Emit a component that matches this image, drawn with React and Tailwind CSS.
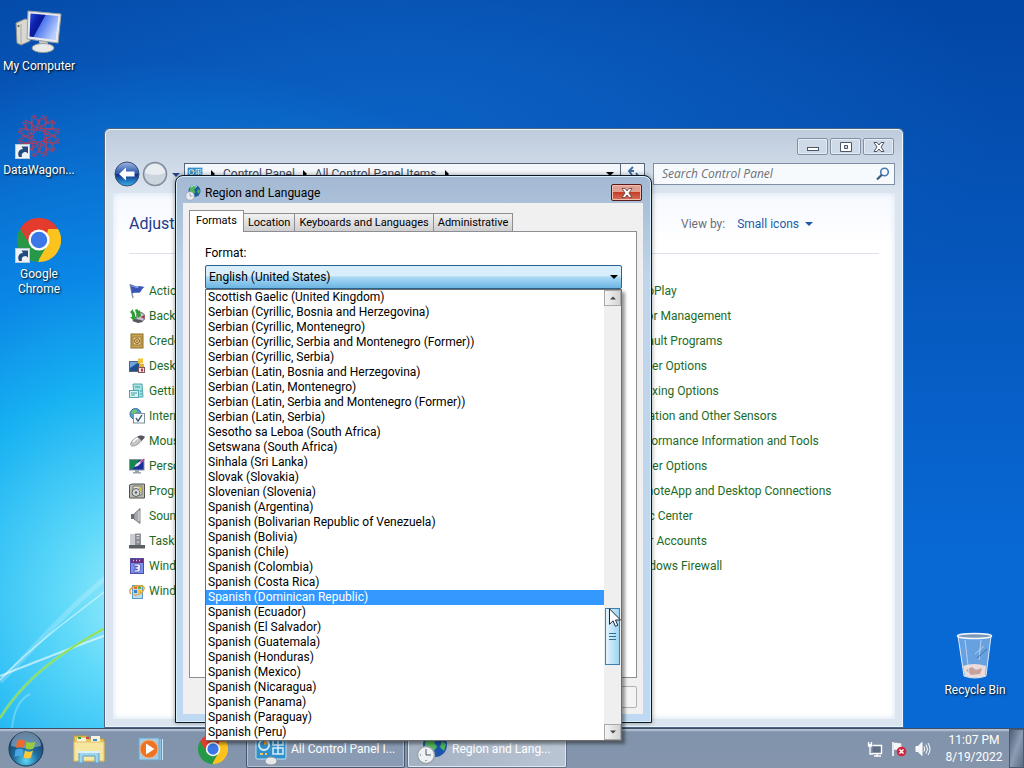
import React, { useState } from 'react';

const FORMATS = [
  'Scottish Gaelic (United Kingdom)',
  'Serbian (Cyrillic, Bosnia and Herzegovina)',
  'Serbian (Cyrillic, Montenegro)',
  'Serbian (Cyrillic, Serbia and Montenegro (Former))',
  'Serbian (Cyrillic, Serbia)',
  'Serbian (Latin, Bosnia and Herzegovina)',
  'Serbian (Latin, Montenegro)',
  'Serbian (Latin, Serbia and Montenegro (Former))',
  'Serbian (Latin, Serbia)',
  'Sesotho sa Leboa (South Africa)',
  'Setswana (South Africa)',
  'Sinhala (Sri Lanka)',
  'Slovak (Slovakia)',
  'Slovenian (Slovenia)',
  'Spanish (Argentina)',
  'Spanish (Bolivarian Republic of Venezuela)',
  'Spanish (Bolivia)',
  'Spanish (Chile)',
  'Spanish (Colombia)',
  'Spanish (Costa Rica)',
  'Spanish (Dominican Republic)',
  'Spanish (Ecuador)',
  'Spanish (El Salvador)',
  'Spanish (Guatemala)',
  'Spanish (Honduras)',
  'Spanish (Mexico)',
  'Spanish (Nicaragua)',
  'Spanish (Panama)',
  'Spanish (Paraguay)',
  'Spanish (Peru)',
];

const TABS = ['Formats', 'Location', 'Keyboards and Languages', 'Administrative'];

const RIGHT_ITEMS = [
  'AutoPlay',
  'Color Management',
  'Default Programs',
  'Folder Options',
  'Indexing Options',
  'Location and Other Sensors',
  'Performance Information and Tools',
  'Power Options',
  'RemoteApp and Desktop Connections',
  'Sync Center',
  'User Accounts',
  'Windows Firewall',
];

/* ---------- small icons (16x16) ---------- */

const LEFT_ITEMS = [
  {
    name: 'Action Center',
    icon: (
      <>
        <path d="M1 1l3 14" stroke="#8f95a8" strokeWidth="1.4" />
        <path d="M1.500 2c3-1 4 2 7 1.500S12 3 15.500 4c-2 1.500-3 2.500-4 5-2 1.500-5 0-8.500 1.500z" fill="#3a55b8" />
        <path d="M2 3c3-.5 4 2 7 1.500" stroke="#8fa4ea" fill="none" />
      </>
    ),
  },
  {
    name: 'Backup and Restore',
    icon: (
      <>
        <circle cx="11.500" cy="9" r="4.500" fill="#c9c3cf" stroke="#6f6a78" />
        <path d="M11.500 9l4-2v4z" fill="#a8364a" />
        <path d="M1 4l3-3v2c2 1 2 3 2 6l2 0-3 4-4-4h2c0-2 0-3-2-5zM6 2l2-1 2 2 1-1 1 6-3 2z" fill="#2f9e35" />
        <path d="M3 13l3-2 6 1 2 2-5 1z" fill="#55595f" />
      </>
    ),
  },
  {
    name: 'Credential Manager',
    icon: (
      <>
        <rect x="2" y="1" width="12" height="14" fill="#c9a455" stroke="#8c6b26" />
        <rect x="4" y="4" width="8" height="8" fill="#e8d090" stroke="#9a7a36" />
        <circle cx="8" cy="8" r="2.500" fill="none" stroke="#8c5a20" />
        <circle cx="8" cy="8" r="0.800" fill="#5c3a10" />
      </>
    ),
  },
  {
    name: 'Desktop Gadgets',
    icon: (
      <>
        <rect x="0.500" y="3.500" width="10" height="10" fill="#1f4f8f" stroke="#5a6675" />
        <path d="M1 4h9L1 10z" fill="#6fa5da" />
        <rect x="9" y="0.500" width="5" height="5" fill="#f0c53c" />
        <rect x="10" y="6" width="5" height="4" fill="#e8b030" />
        <rect x="9.500" y="9.500" width="6" height="5" fill="#f4e4e4" stroke="#7c5560" />
        <path d="M12 10.500h2v3h-2z" fill="#c03848" />
      </>
    ),
  },
  {
    name: 'Getting Started',
    icon: (
      <>
        <path d="M4 1h9l1 13H5z" fill="#a6e2e0" stroke="#4fa5ac" />
        <rect x="0.500" y="7.500" width="9" height="7" fill="#d7f4f2" stroke="#4fa5ac" />
        <path d="M6 4h5M2 10h6M2 12h4M11 8h2M11 11h2" stroke="#3f9ba2" />
      </>
    ),
  },
  {
    name: 'Internet Options',
    icon: (
      <>
        <circle cx="6.500" cy="6" r="5.500" fill="#4c9ed0" stroke="#3a7399" />
        <path d="M3 3c2-2 5-1 5 0S6 6 4 6 2 4 3 3z" fill="#7cc46a" />
        <rect x="4.500" y="5.500" width="11" height="9.500" fill="#f6fafc" stroke="#7f9399" />
        <path d="M7 10l2 3 4-6" stroke="#2b4f70" fill="none" strokeWidth="1.300" />
      </>
    ),
  },
  {
    name: 'Mouse',
    icon: (
      <>
        <path d="M2 10c1-3 5-6 8-6 3 0 4 1 3 3-2 3-6 6-9 6-2 0-3-1-2-3z" fill="#c6c6c9" stroke="#9a9a9f" />
        <path d="M8 4c2-2 6-2 8 0-1 2-3 3-4 4 0-2-2-3-4-4z" fill="#55555b" />
        <path d="M4 9c1-2 3-3 5-4" stroke="#fff" strokeWidth="1.500" fill="none" />
      </>
    ),
  },
  {
    name: 'Personalization',
    icon: (
      <>
        <rect x="0.500" y="1.500" width="14.500" height="10.500" fill="#1a2f9c" stroke="#8b93a6" />
        <path d="M1 2h9L4 11H1z" fill="#14854c" />
        <path d="M5 9l2-3 7-5 1 1-6 6z" fill="#e7d9ec" />
        <path d="M11 4l4-3.500.5 1L12 5z" fill="#b83070" />
        <path d="M6 12h4v2h2v1.500H4V14h2z" fill="#9aa2ad" />
      </>
    ),
  },
  {
    name: 'Programs and Features',
    icon: (
      <>
        <path d="M0.500 2v13h15V1H3z" fill="#b9bcb4" stroke="#50534e" />
        <path d="M4 3h9v9H4z" fill="#e4e2cc" stroke="#74776c" />
        <circle cx="7" cy="9.500" r="4" fill="#d4d6d8" stroke="#5d6166" />
        <circle cx="7" cy="9.500" r="1.200" fill="#5a5d60" />
        <path d="M10 4h2v4h-2z" fill="#d9b93c" />
      </>
    ),
  },
  {
    name: 'Sound',
    icon: (
      <>
        <path d="M2 6h3v5H2z" fill="#6a6d70" />
        <path d="M5 6l6-5.500v15L5 11z" fill="#a6a9ab" stroke="#6c6f72" strokeWidth="0.800" />
        <path d="M10 3v10" stroke="#e2e4e6" />
      </>
    ),
  },
  {
    name: 'Taskbar and Start Menu',
    icon: (
      <>
        <path d="M1 1h5v11H1z" fill="#c9cccf" />
        <rect x="6" y="0.500" width="6" height="11.500" fill="#8c9094" />
        <path d="M7.500 2.500h3M7.500 5h3M9 8v2" stroke="#e2e4e6" />
        <rect x="0" y="12" width="16" height="3.500" fill="#5b5f63" />
      </>
    ),
  },
  {
    name: 'Windows CardSpace',
    icon: (
      <>
        <rect x="1.500" y="0.500" width="13" height="15" fill="#7d90f0" stroke="#4c50a8" />
        <rect x="2" y="1" width="12" height="4" fill="#66307f" />
        <path d="M5 6h4c3 0 3 3 2 4 1 2 0 4-3 4H5v-2h3c1 0 1-1 0-1H6V9h2c1 0 1-1 0-1H5z" fill="#f2f4ff" stroke="#2a2f94" strokeWidth="0.600" />
        <path d="M4 2.500h1M7 2.500h1M10 2.500h1" stroke="#e4b8ee" strokeWidth="1.500" />
      </>
    ),
  },
  {
    name: 'Windows Update',
    icon: (
      <>
        <rect x="3.500" y="2.500" width="10" height="13" fill="#b6def2" stroke="#5c9cc4" />
        <path d="M5 3h3v3H5z" fill="#e2683c" />
        <path d="M9 3h3v3H9z" fill="#62b04a" />
        <path d="M5 7h3v3H5z" fill="#3c80cc" />
        <path d="M9 7h3v3H9z" fill="#f0bd38" />
        <path d="M2 11C-1 8 2 4 7 3s9 0 8 3-5 7-10 6" fill="none" stroke="#e3a53c" strokeWidth="1.400" />
      </>
    ),
  },
];

/* ---------- larger drawings ---------- */

const Wallpaper = () => (
  <svg className="absolute bottom-0 left-0 w-60 h-[330px]" viewBox="0 0 240 330" fill="none" aria-hidden="true">
    <path d="M0 284C40 245 60 215 130 160" stroke="#fff" strokeOpacity="0.2" strokeWidth="5" />
    <path d="M0 282C35 245 70 220 160 152" stroke="#e9fbff" strokeOpacity="0.6" strokeWidth="1.500" />
    <path d="M0 278C30 266 70 250 160 217" stroke="#fff" strokeOpacity="0.6" strokeWidth="2" />
    <path d="M0 320C25 280 60 248 180 192" stroke="#b8ee8c" strokeOpacity="0.5" strokeWidth="3" />
    <path d="M0 320C25 280 60 248 180 192" stroke="#8fe04a" strokeWidth="1.500" />
    <path d="M12 330C14 310 22 300 30 296" stroke="#fff" strokeOpacity="0.25" strokeWidth="2" />
  </svg>
);

const ShortcutArrow = () => (
  <svg className="absolute bottom-0 left-0 w-4 h-4" viewBox="0 0 16 16" aria-hidden="true">
    <rect x="0.500" y="0.500" width="14" height="14" fill="#edf3f8" stroke="#b9c9d8" />
    <path d="M4 13c-2-4 0-8 4-8L6.500 2.500H13v7L11 8C8 8 6 9.500 7 13z" fill="#224a7c" />
  </svg>
);

const ChromeLogo = ({ className }) => (
  <svg className={className} viewBox="0 0 48 48" aria-hidden="true">
    <path d="M24 24L3.200 12A24 24 0 0 1 44.800 12z" fill="#e33b2e" />
    <path d="M24 24L44.800 12A24 24 0 0 1 24 48z" fill="#fcc31e" />
    <path d="M24 24L24 48A24 24 0 0 1 3.200 12z" fill="#279847" />
    <path d="M24 12h20.800L44 12H24zM14.500 29.500L3.200 12 24 24z" fill="#e33b2e" />
    <path d="M33.500 29.500L23 48h2L34 12h10.800v16z" fill="#fcc31e" />
    <path d="M14.500 29.500L3.200 12 3 30 20 47h3l8-14z" fill="#279847" />
    <circle cx="24" cy="24" r="11.500" fill="#fff" />
    <circle cx="24" cy="24" r="9" fill="#3b78e7" />
  </svg>
);

const ComputerIcon = () => (
  <svg className="w-12 h-11" viewBox="0 0 48 44" aria-hidden="true">
    <defs>
      <linearGradient id="screen" x1="0" y1="0" x2="1" y2="0.500">
        <stop offset="0" stopColor="#2a4fe0" />
        <stop offset="0.300" stopColor="#0a1ea8" />
        <stop offset="0.450" stopColor="#0a1a98" />
        <stop offset="0.480" stopColor="#4f76ee" />
        <stop offset="1" stopColor="#b7d0ff" />
      </linearGradient>
    </defs>
    <path d="M1 13l9-4 5 1v21l-9 4-4-2z" fill="#d9d9d2" stroke="#8d8f8e" />
    <path d="M6 14v20" stroke="#a9aaa6" />
    <circle cx="3.500" cy="16" r="1" fill="#555" />
    <path d="M24 31h8l2 5h-9z" fill="#c6c9cb" />
    <ellipse cx="28" cy="38" rx="11" ry="4.500" fill="#e8eaea" stroke="#96999b" />
    <path d="M13 1l33 3-3 29-31-4z" fill="#e8eaec" stroke="#9aa0a6" />
    <path d="M15.500 3.500l28 2.500-3 24-26-3.500z" fill="url(#screen)" />
  </svg>
);

const WagonIcon = () => (
  <svg className="w-11 h-11" viewBox="-22 -22 44 44" fill="none" stroke="#c23a55" strokeWidth="0.700" aria-hidden="true">
    {[0, 30, 60, 90, 120, 150, 180, 210, 240, 270, 300, 330].map((a) => (
      <g key={a} transform={`rotate(${a})`}>
        <path d="M0-6L7-12 4-21 0-15-4-21-7-12z" />
        <path d="M-3-7L9-14" />
      </g>
    ))}
    <circle r="6" />
  </svg>
);

const RecycleBin = () => (
  <svg className="w-10 h-12" viewBox="0 0 40 48" aria-hidden="true">
    <path d="M3 4h33l-5 40q-11 4-22 0z" fill="#a9c8e6" fillOpacity="0.600" stroke="#dcebf7" />
    <path d="M8 34q11-4 23 0l-1 10q-10 3-20 0z" fill="#e9dcda" />
    <path d="M11 38l6-3 4 3 6-2-2 6-9 1z" fill="#c7a19e" />
    <path d="M10 8l4 34M20 22l9-8M26 8l-2 20" stroke="#e2f0fb" strokeOpacity="0.600" />
    <path d="M22 26l10-9" stroke="#456b9e" />
    <ellipse cx="19.500" cy="4" rx="17" ry="2.500" fill="#7a98b5" stroke="#eef6fc" strokeWidth="1.500" />
  </svg>
);

const GlobeClock = ({ className }) => (
  <svg className={className} viewBox="0 0 32 32" aria-hidden="true">
    <circle cx="19" cy="12" r="12" fill="#1d55ad" />
    <path d="M12 3c5-3 10-2 12 1l-3 4-3 1 3 5-4 5-5-6-3 0c0-4 1-8 3-10zM26 8l4 3-2 7-4-4z" fill="#4fb558" />
    <path d="M11 5c3-4 9-5 13-2" stroke="#c9efff" strokeWidth="2" fill="none" />
    <circle cx="10" cy="22" r="8.500" fill="#eef1f3" stroke="#9ba3ab" strokeWidth="1.500" />
    <path d="M10 16v6h5M10 27v1M4 22h1" stroke="#4c5660" fill="none" />
  </svg>
);

const PanelIcon = ({ className }) => (
  <svg className={className} viewBox="0 0 32 32" aria-hidden="true">
    <rect x="1" y="3" width="30" height="23" rx="1" fill="#318fcb" stroke="#bfe2f4" />
    <circle cx="9" cy="12" r="5" fill="none" stroke="#d6effb" strokeWidth="2" />
    <path d="M9 6l4 5-4 1z" fill="#f2a13a" />
    <path d="M18 7h10v5H18zM18 15h10v6H18zM23 7v14" fill="none" stroke="#d6effb" strokeWidth="1.500" />
    <path d="M5 21h3M10 21h2" stroke="#f4c65a" strokeWidth="2" />
    <ellipse cx="16" cy="28" rx="6" ry="4" fill="#e6e8ea" stroke="#8e9499" />
  </svg>
);

const StartOrb = () => (
  <svg className="w-9 h-9" viewBox="0 0 36 36" aria-hidden="true">
    <defs>
      <radialGradient id="orb" cx="0.500" cy="0.850" r="0.800">
        <stop offset="0" stopColor="#5fd6f4" />
        <stop offset="0.450" stopColor="#1f6d9f" />
        <stop offset="1" stopColor="#173a5e" />
      </radialGradient>
    </defs>
    <circle cx="18" cy="18" r="17" fill="url(#orb)" stroke="#1b3350" />
    <path d="M3 15a15 14 0 0 1 30 0q-15 4-30 0z" fill="#c3dcea" fillOpacity="0.450" />
    <path d="M9 10q4-3 8 0l-1 7q-4-2-8 0z" fill="#ee6a2e" />
    <path d="M18.500 10.500q4 2.500 9 0l-2 7q-4 2-8 0z" fill="#9acb3c" />
    <path d="M7.500 19q4-3 8 0l-1.500 7q-3-2-7.500 0z" fill="#4aa5e4" />
    <path d="M17 19.500q4 2.500 8 0l-2 7q-4 2-7.500 0z" fill="#fbc93a" />
  </svg>
);

const ExplorerIcon = () => (
  <svg className="w-8 h-8" viewBox="0 0 32 32" aria-hidden="true">
    <path d="M1 3h12l2 3h16v22H1z" fill="#e9c760" stroke="#c39a3a" />
    <path d="M4 5h9v5H4zM18 3h9v6h-9z" fill="#f7f3da" />
    <path d="M5 4h3v2H5z" fill="#3f9a4a" />
    <path d="M13 4h3v2h-3z" fill="#d0463a" />
    <path d="M20 6h4v2h-4z" fill="#3d8ed0" />
    <path d="M1 9h30v19H1z" fill="#f7e6a0" stroke="#e0c069" />
    <path d="M6 30V19h20v11h-4v-7H10v7z" fill="#9fd3ee" stroke="#579fc8" />
    <path d="M5 19h22" stroke="#d9f1fb" strokeWidth="2" />
  </svg>
);

const MediaIcon = () => (
  <svg className="w-7 h-6" viewBox="0 0 28 24" aria-hidden="true">
    <path d="M8 2h17v21H8z" fill="#4f9bcf" />
    <path d="M22 2v21M24.500 2v21" stroke="#cbe6f4" />
    <rect x="1" y="1" width="20" height="22" fill="#a3cce6" stroke="#6ea4c8" />
    <circle cx="11" cy="12" r="9" fill="#ec7423" stroke="#f7b27a" />
    <path d="M8 6.500l8.500 5.500L8 17.500z" fill="#fff" />
  </svg>
);

const Caret = ({ className }) => (
  <svg className={className} viewBox="0 0 8 4" fill="currentColor" aria-hidden="true">
    <path d="M0 0h8L4 4z" />
  </svg>
);

const Crumb = () => (
  <svg className="mx-2 w-1 h-2 text-black" viewBox="0 0 4 8" fill="currentColor" aria-hidden="true">
    <path d="M0 0l4 4-4 4z" />
  </svg>
);

const MousePointer = () => (
  <svg className="pointer-events-none absolute -top-px left-[3px] z-10 w-3 h-[19px]" viewBox="0 0 12 19" aria-hidden="true">
    <path d="M0.500 0.800v15.500l3.600-3.500 2.300 5.500 2.400-1-2.300-5.300h5z" fill="#fff" stroke="#1c2733" />
  </svg>
);

/* ---------- desktop ---------- */

const DesktopIcon = ({ label, children, shortcut }) => (
  <button className="flex w-[78px] h-[104px] flex-col items-center gap-[3px] text-xs leading-[15px] text-white text-shadow-[1px_1px_2px_#000]">
    <span className="relative flex h-12 w-12 items-center justify-center">
      {children}
      {shortcut && <ShortcutArrow />}
    </span>
    <span className="w-[78px]">{label}</span>
  </button>
);

const CaptionButton = ({ label, children }) => (
  <button
    aria-label={label}
    className="flex h-[17px] w-[31px] items-center justify-center rounded-xs border border-[#8390a3] bg-[#cedae7] shadow-[inset_0_0_0_1px_#e4edf5]"
  >
    <svg className="w-3 h-3" viewBox="0 0 12 12" fill="#fff" stroke="#4d5668" aria-hidden="true">
      {children}
    </svg>
  </button>
);

const ControlPanel = () => (
  <section className="absolute left-[104px] top-[128px] flex w-[800px] h-[600px] flex-col rounded-t-md border border-[#4d6486] bg-[#d9e5f2] bg-linear-to-b from-[#becbdc] to-[#dbe5f0] to-[64px] px-2 pb-2 shadow-[inset_0_0_0_1px_#eaf8fc]">
    <div className="flex h-[34px] items-end justify-end gap-0.5 pr-px pb-2">
      <CaptionButton label="Minimize">
        <rect x="0.500" y="6.500" width="11" height="3" />
      </CaptionButton>
      <CaptionButton label="Maximize">
        <path d="M0.500 1.500h11v9H.500zM4.500 4.500v3h3v-3z" fillRule="evenodd" />
      </CaptionButton>
      <CaptionButton label="Close">
        <path d="M1 1.500h3l2 2.500 2-2.500h3L8 6l3 4.500H8L6 8l-2 2.500H1L4 6z" />
      </CaptionButton>
    </div>
    <div className="flex h-[30px] items-start">
      <button aria-label="Back" className="-mt-0.5 ml-px h-[26px] w-[26px]">
        <svg viewBox="0 0 26 26" aria-hidden="true">
          <defs>
            <linearGradient id="back" x1="0" y1="0" x2="0" y2="1">
              <stop offset="0" stopColor="#9db8e2" />
              <stop offset="0.480" stopColor="#2a55ae" />
              <stop offset="0.520" stopColor="#0e2f86" />
              <stop offset="1" stopColor="#35b4ee" />
            </linearGradient>
          </defs>
          <circle cx="13" cy="13" r="12" fill="url(#back)" stroke="#3d4d70" />
          <path d="M5 13l7-6.500v4h8.500v5H12v4z" fill="#fff" />
        </svg>
      </button>
      <button aria-label="Forward" className="-mt-0.5 ml-0.5 h-[26px] w-[26px]">
        <svg viewBox="0 0 26 26" aria-hidden="true">
          <circle cx="13" cy="13" r="11.500" fill="#ccd4de" stroke="#808a99" strokeWidth="1.500" />
          <path d="M3 12a10 9 0 0 1 20 0q-10 4-20 0z" fill="#e9edf2" />
        </svg>
      </button>
      <button aria-label="Recent pages" className="ml-1 mt-2.5 text-[#2b438a]">
        <Caret className="w-2 h-1" />
      </button>
      <div className="ml-1 flex h-[22px] flex-1 items-center border border-[#56657a] bg-[#f4f8fc] text-xs text-[#3c4659]">
        <PanelIcon className="ml-0.5 w-4 h-4" />
        <Crumb />
        <a href="#control-panel">Control Panel</a>
        <Crumb />
        <a href="#all-items">All Control Panel Items</a>
        <Crumb />
        <Caret className="ml-auto mr-1.5 w-2 h-1 text-black" />
        <button aria-label="Refresh" className="flex h-full w-6 items-center justify-center border-l border-[#56657a] text-[#3f6f9f]">
          <svg className="w-4 h-4" viewBox="0 0 16 16" fill="none" stroke="currentColor" strokeWidth="2" aria-hidden="true">
            <path d="M8 1L4 5l3 4M4 5h5M11 15l3-4-3-4M14 11H9" />
          </svg>
        </button>
      </div>
      <label className="ml-2 flex h-[22px] w-[242px] items-center border border-[#7f90a6] bg-[#f7fafd] pl-2 pr-1">
        <input
          aria-label="Search Control Panel"
          placeholder="Search Control Panel"
          className="min-w-0 flex-1 font-['Open_Sans',sans-serif] text-xs italic outline-none placeholder:text-[#6c7078]"
        />
        <svg className="w-3.5 h-3.5" viewBox="0 0 14 14" fill="none" aria-hidden="true">
          <circle cx="8.500" cy="5" r="3.800" stroke="#4a78b0" strokeWidth="1.600" />
          <path d="M5.800 7.800L1 12.500" stroke="#3d5a80" strokeWidth="2.200" />
        </svg>
      </label>
    </div>
    <div className="flex-1 bg-white bg-linear-to-b from-[#f5f8fe] to-white to-[50px] px-4 shadow-[inset_0_0_6px_#d5e2f2]">
      <div className="flex h-[61px] items-center border-b border-[#dde3ec] pt-0.5">
        <h1 className="w-[552px] text-base text-[#1e3a8c]">Adjust your computer's settings</h1>
        <span className="text-xs text-[#6b6f78]">View by:</span>
        <button className="ml-3 flex items-center gap-1.5 text-xs text-[#1f5ba8]">
          Small icons
          <Caret className="w-2 h-1" />
        </button>
      </div>
      <div className="grid grid-cols-[480px_1fr] pt-6 text-xs text-[#1c6b25]">
        <ul>
          {LEFT_ITEMS.map((item) => (
            <li key={item.name}>
              <a href="#item" className="flex h-[25px] items-center gap-1">
                <svg className="w-4 h-4" viewBox="0 0 16 16" fill="none" aria-hidden="true">
                  {item.icon}
                </svg>
                {item.name}
              </a>
            </li>
          ))}
        </ul>
        <ul className="pl-5">
          {RIGHT_ITEMS.map((name) => (
            <li key={name}>
              <a href="#item" className="flex h-[25px] items-center whitespace-nowrap">{name}</a>
            </li>
          ))}
        </ul>
      </div>
    </div>
  </section>
);

const FormatList = () => (
  <div className="absolute left-0 top-full z-10 flex w-full border border-[#6d6d6d] bg-white shadow-[3px_3px_3px_#00000066]">
    <ul role="listbox" aria-label="Format list" className="flex-1">
      {FORMATS.map((name) => (
        <li
          key={name}
          role="option"
          aria-selected={name === 'Spanish (Dominican Republic)'}
          className="h-[15px] pl-0.5 text-xs leading-[15px] whitespace-nowrap text-black aria-selected:bg-[#3399ff] aria-selected:text-white"
        >
          {name}
        </li>
      ))}
    </ul>
    <div className="flex w-[17px] flex-col bg-[#efefef]">
      <button aria-label="Scroll up" className="flex h-4 items-center justify-center border border-[#a9a9a9] bg-linear-to-r from-[#f5f5f5] to-[#d3d3d3] text-[#444]">
        <Caret className="w-1.5 h-1 rotate-180" />
      </button>
      <div className="flex-1" />
      <div className="relative ml-px mr-px flex h-[57px] flex-col items-center justify-center gap-0.5 border border-[#3c7fb1] bg-linear-to-r from-[#e3f4fc] to-[#9cd5f3]">
        <span className="h-px w-[7px] bg-[#31708f]" />
        <span className="h-px w-[7px] bg-[#31708f]" />
        <span className="h-px w-[7px] bg-[#31708f]" />
        <MousePointer />
      </div>
      <div className="h-[59px]" />
      <button aria-label="Scroll down" className="flex h-4 items-center justify-center border border-[#a9a9a9] bg-linear-to-r from-[#f5f5f5] to-[#d3d3d3] text-[#444]">
        <Caret className="w-1.5 h-1" />
      </button>
    </div>
  </div>
);

const RegionDialog = () => {
  const [tab, setTab] = useState('Formats');

  return (
    <section className="absolute left-[175px] top-[175px] flex w-[477px] h-[548px] flex-col rounded-t-lg border border-[#0b1724] bg-[#c3d8ee] bg-linear-to-b from-[#a3b8d2] via-[#c0d4ea] via-[100px] to-[#bfd9f2] pl-[7px] pr-2 pb-2 shadow-[inset_0_0_0_1px_#d8f0fa,0_0_5px_#0006]">
      <header className="flex h-[27px] items-end justify-between pl-0.5 pr-px pb-0.5">
        <h2 className="flex items-center gap-1 text-xs leading-[15px] text-black">
          <GlobeClock className="w-4 h-4" />
          Region and Language
        </h2>
        <button
          aria-label="Close"
          className="flex h-[17px] w-[31px] items-center justify-center rounded-xs border border-[#5b1a1a] bg-linear-to-b from-[#e0a193] from-45% via-[#c43e28] via-50% to-[#d8705a] shadow-[inset_0_0_0_1px_#f0bdb0]"
        >
          <svg className="w-3 h-3" viewBox="0 0 12 12" fill="#fff" stroke="#5a3a3a" strokeWidth="0.800" aria-hidden="true">
            <path d="M1 1.500h3l2 2.500 2-2.500h3L8 6l3 4.500H8L6 8l-2 2.500H1L4 6z" />
          </svg>
        </button>
      </header>
      <div className="flex flex-1 flex-col bg-[#f0f0f0] px-[6px] pt-2 pb-[6px]">
        <div role="tablist" className="flex h-5 items-end text-[11px] leading-[14px] text-black">
          {TABS.map((name) => (
            <button
              key={name}
              role="tab"
              aria-selected={tab === name}
              onClick={() => setTab(name)}
              className="h-[18px] -ml-px border border-b-0 border-[#8c8e94] bg-linear-to-b from-[#f2f2f2] to-[#cfcfcf] px-1 whitespace-nowrap first:ml-0 aria-selected:relative aria-selected:z-10 aria-selected:-mb-px aria-selected:h-[22px] aria-selected:bg-none aria-selected:bg-white aria-selected:px-1.5 aria-selected:pb-0.5"
            >
              {name}
            </button>
          ))}
        </div>
        <div role="tabpanel" className="flex-1 border border-[#8c8e94] bg-white px-[15px] pt-3.5">
          <label htmlFor="format" className="block text-xs leading-[15px] text-black">Format:</label>
          <div className="relative mt-1 w-[417px]">
            <select
              id="format"
              className="block h-6 w-full appearance-none rounded-xs border border-[#2c628b] bg-linear-to-b from-[#d8effb] from-45% via-[#a9daf5] via-50% to-[#6cb5e3] pl-[3px] text-xs text-black"
            >
              <option>English (United States)</option>
            </select>
            <Caret className="pointer-events-none absolute right-1 top-2.5 w-2 h-1 text-black" />
            <FormatList />
          </div>
        </div>
        <div className="mt-2 flex justify-end gap-1.5 text-xs">
          {['OK', 'Cancel', 'Apply'].map((name) => (
            <button key={name} className="h-[22px] w-[75px] rounded-xs border border-[#adb2b5] bg-[#f4f4f4] text-[#838383]">
              {name}
            </button>
          ))}
        </div>
      </div>
    </section>
  );
};

const Taskbar = () => (
  <footer className="flex h-10 shrink-0 items-center border-t border-[#3e4f66] bg-linear-to-b from-[#b5c3d5] from-[1px] via-[#8093ab] via-[3px] to-[#8596ac]">
    <button aria-label="Start" className="ml-2">
      <StartOrb />
    </button>
    <div className="flex w-[202px] items-center justify-between pl-[29px] pr-[18px]">
      <button aria-label="Windows Explorer"><ExplorerIcon /></button>
      <button aria-label="Windows Media Player"><MediaIcon /></button>
      <button aria-label="Google Chrome"><ChromeLogo className="w-[30px] h-[30px]" /></button>
    </div>
    <button className="flex h-[39px] w-[159px] items-center gap-1 rounded-xs border border-[#45566d] bg-[#899bb2] pl-2 text-xs text-white shadow-[inset_0_0_0_1px_#b5c2d2]">
      <PanelIcon className="w-8 h-8" />
      All Control Panel I...
    </button>
    <button className="ml-0.5 flex h-[39px] w-[160px] items-center gap-1 rounded-xs border border-[#5f7189] bg-linear-to-r from-[#a3b1c3] to-[#bac5d4] pl-2 text-xs text-white shadow-[inset_0_0_0_1px_#e0e7ef]">
      <GlobeClock className="w-8 h-8" />
      Region and Lang...
    </button>
    <div className="ml-auto flex h-full items-center gap-2">
      <svg className="w-4 h-4" viewBox="0 0 16 16" fill="none" stroke="#fff" aria-hidden="true">
        <path d="M5.500 4.500h9v8h-9" fill="#5e6f86" stroke="#fff" strokeWidth="1.400" />
        <path d="M1.500 1v4h3V1M3 5v8h3M1 3.500h4M7 15h7M10 12v3" strokeWidth="1.300" />
      </svg>
      <svg className="w-4 h-4" viewBox="0 0 16 16" aria-hidden="true">
        <path d="M2 1v14" stroke="#fff" strokeWidth="1.600" />
        <path d="M3 2c3-1 4 1 7 0l1 7c-3 1-5-1-8 0z" fill="#f4f6f8" />
        <circle cx="10.500" cy="10.500" r="4.800" fill="#d4243a" />
        <path d="M8.500 8.500l4 4M12.500 8.500l-4 4" stroke="#fff" strokeWidth="1.500" />
      </svg>
      <svg className="w-4 h-4" viewBox="0 0 16 16" fill="none" stroke="#fff" aria-hidden="true">
        <path d="M1 5.500h2l4-4v13l-4-4H1z" fill="#f4f6f8" />
        <path d="M9 5.500q1.500 2.500 0 5M11 3.500q3 4.500 0 9M13 2q4 6 0 12" />
      </svg>
      <div className="flex h-full items-center">
        <div className="w-[70px] text-center text-xs leading-[17px] text-white">
          <p>11:07 PM</p>
          <p>8/19/2022</p>
        </div>
        <button aria-label="Show desktop" className="h-full w-[15px] border border-[#4c5b70] bg-linear-to-br from-[#4e5f76] via-[#8c9db3] to-[#5a6b82]" />
      </div>
    </div>
  </footer>
);

export default function App() {
  return (
    <div className="flex h-screen flex-col overflow-hidden font-['Roboto','Open_Sans',sans-serif]">
      <main className="relative z-10 flex-1 bg-[radial-gradient(circle_at_150px_600px,#a4eefb_0,#5fd9f9_90px,#18b2f2_220px,#0a87e6_330px,#0868d000_540px),radial-gradient(ellipse_600px_260px_at_400px_130px,#0b62c4,#0b62c400),linear-gradient(#0346a4,#0868d4_75%)]">
        <Wallpaper />
        <div className="flex w-20 flex-col pt-2">
          <DesktopIcon label="My Computer"><ComputerIcon /></DesktopIcon>
          <DesktopIcon label="DataWagon..." shortcut><WagonIcon /></DesktopIcon>
          <DesktopIcon label="Google Chrome" shortcut><ChromeLogo className="w-11 h-11" /></DesktopIcon>
        </div>
        <div className="absolute -bottom-2 right-2.5">
          <DesktopIcon label="Recycle Bin"><RecycleBin /></DesktopIcon>
        </div>
        <ControlPanel />
        <RegionDialog />
      </main>
      <Taskbar />
    </div>
  );
}
